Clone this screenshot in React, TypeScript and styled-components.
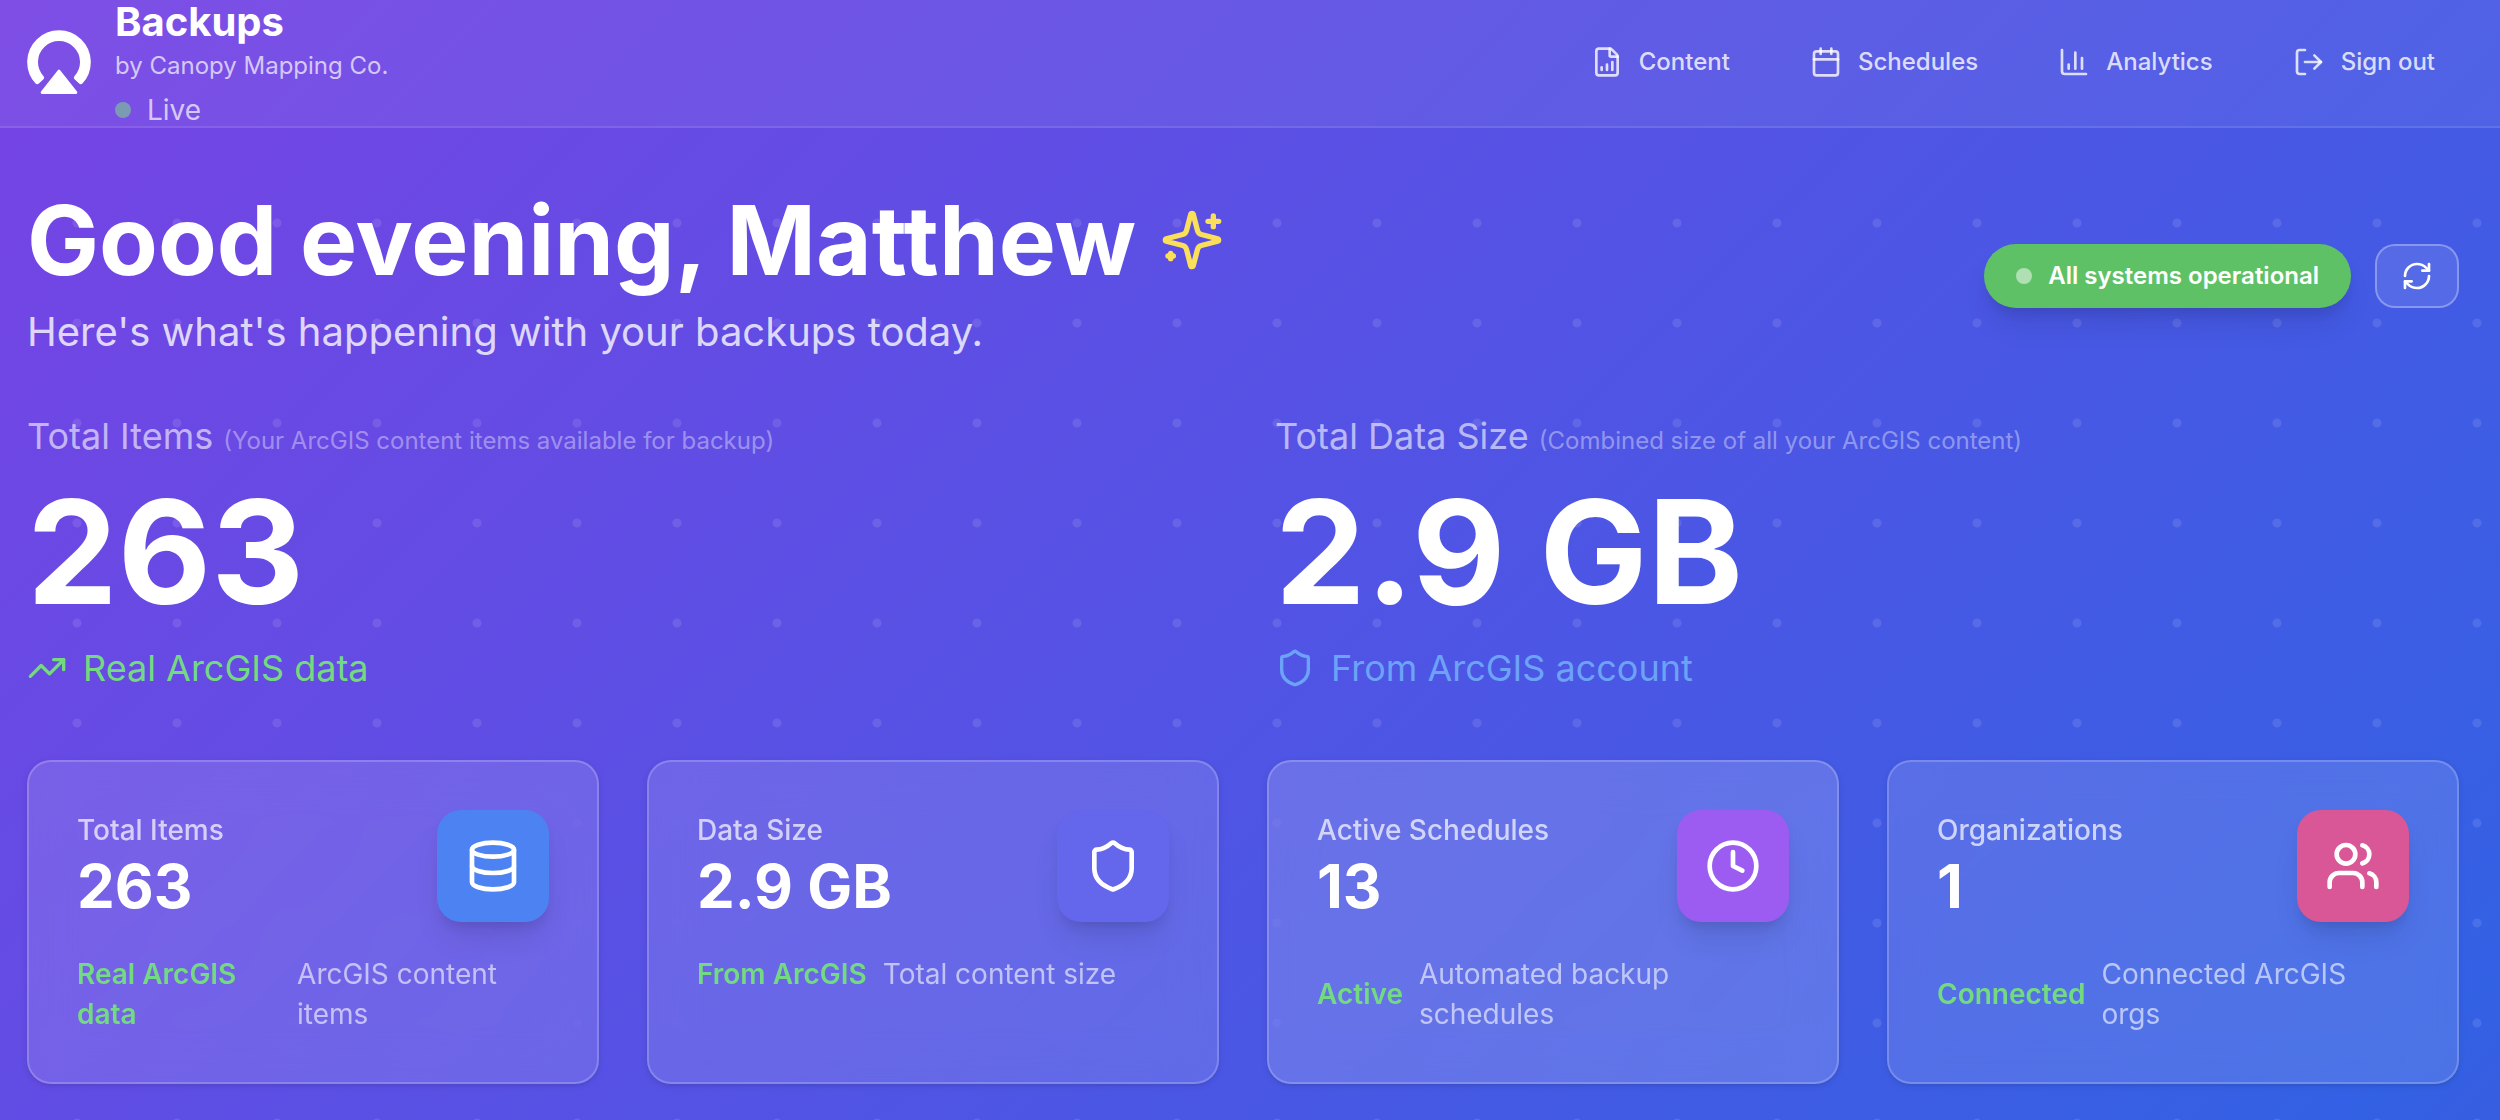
import React from "react";
import styled, { createGlobalStyle } from "styled-components";
import {
  Calendar,
  ChartColumn,
  Clock,
  Database,
  FileChartColumnIncreasing,
  LogOut,
  RefreshCw,
  Shield,
  TrendingUp,
  Users,
  type LucideIcon,
} from "lucide-react";

const GlobalStyle = createGlobalStyle`
  *, *::before, *::after { box-sizing: border-box; }
  body {
    margin: 0;
    font-family: Inter, "Liberation Sans", sans-serif;
    color: #ffffff;
    -webkit-font-smoothing: antialiased;
  }
  h1, h2, p { margin: 0; }
`;

const Page = styled.div`
  display: flex;
  flex-direction: column;
  min-height: 100vh;
  background: linear-gradient(135deg, #7743e4 0%, #3361e4 96%, #375de0 100%);
`;

const Header = styled.header`
  display: flex;
  align-items: center;
  justify-content: space-between;
  height: 128px;
  padding: 0 41px 2px 27px;
  background: rgba(255, 255, 255, 0.06);
  border-bottom: 2px solid rgba(255, 255, 255, 0.1);
`;

const Brand = styled.div`
  display: flex;
  align-items: center;
  gap: 24px;
`;

const BrandName = styled.p`
  font-size: 40px;
  line-height: 56px;
  font-weight: 700;
`;

const BrandOwner = styled.p`
  font-size: 24px;
  line-height: 32px;
  color: rgba(255, 255, 255, 0.7);
`;

const LiveStatus = styled.p`
  display: flex;
  align-items: center;
  gap: 16px;
  margin-top: 8px;
  font-size: 28px;
  line-height: 40px;
  color: rgba(255, 255, 255, 0.7);
`;

const Dot = styled.span<{ $color: string }>`
  width: 16px;
  height: 16px;
  border-radius: 50%;
  background: ${(p) => p.$color};
`;

const Nav = styled.nav`
  display: flex;
  align-items: center;
  gap: 32px;
`;

const NavLink = styled.a`
  display: flex;
  align-items: center;
  gap: 16px;
  padding: 16px 24px;
  font-size: 24px;
  line-height: 32px;
  font-weight: 500;
  color: rgba(255, 255, 255, 0.8);
  text-decoration: none;
`;

const NavButton = styled.button`
  display: flex;
  align-items: center;
  gap: 16px;
  padding: 16px 24px;
  border: 0;
  background: none;
  font: 500 24px/32px Inter, "Liberation Sans", sans-serif;
  color: rgba(255, 255, 255, 0.8);
  cursor: pointer;
`;

const Main = styled.main`
  flex: 1;
  padding: 64px 41px 36px 27px;
  background-image: radial-gradient(circle at 50px 50px, rgba(255, 255, 255, 0.1) 4px, transparent 5px);
  background-size: 100px 100px;
  background-position: 27px 45px;
`;

const Hero = styled.section`
  display: flex;
  align-items: center;
  justify-content: space-between;
  margin-bottom: 48px;
`;

const Greeting = styled.h1`
  display: flex;
  align-items: center;
  gap: 24px;
  margin-bottom: 16px;
  font-size: 96px;
  line-height: 96px;
  font-weight: 700;
`;

const Subtitle = styled.p`
  font-size: 40px;
  line-height: 56px;
  color: rgba(255, 255, 255, 0.8);
`;

const Actions = styled.div`
  display: flex;
  align-items: center;
  gap: 24px;
`;

const StatusBadge = styled.div`
  display: flex;
  align-items: center;
  gap: 16px;
  padding: 16px 32px;
  border-radius: 32px;
  background: #5fc166;
  box-shadow: 0 20px 30px -6px rgba(0, 0, 0, 0.1), 0 8px 12px -4px rgba(0, 0, 0, 0.1);
  font-size: 24px;
  line-height: 32px;
  font-weight: 600;
`;

const RefreshButton = styled.button`
  display: flex;
  align-items: center;
  justify-content: center;
  height: 64px;
  padding: 0 24px;
  border: 2px solid rgba(255, 255, 255, 0.3);
  border-radius: 20px;
  background: rgba(255, 255, 255, 0.1);
  color: #ffffff;
  cursor: pointer;
`;

const Totals = styled.section`
  display: grid;
  grid-template-columns: repeat(2, minmax(0, 1fr));
  gap: 64px;
  margin-bottom: 64px;
`;

const TotalLabel = styled.h2`
  margin-bottom: 16px;
  font-size: 36px;
  line-height: 56px;
  font-weight: 400;
  color: rgba(255, 255, 255, 0.6);
`;

const TotalHint = styled.span`
  font-size: 24px;
  line-height: 32px;
  color: rgba(255, 255, 255, 0.4);
`;

const TotalValue = styled.p`
  margin-bottom: 16px;
  font-size: 144px;
  line-height: 144px;
  font-weight: 700;
`;

const TotalNote = styled.p<{ $color: string }>`
  display: flex;
  align-items: center;
  gap: 16px;
  font-size: 36px;
  line-height: 56px;
  color: ${(p) => p.$color};
`;

const Cards = styled.section`
  display: grid;
  grid-template-columns: repeat(4, minmax(0, 1fr));
  gap: 48px;
`;

const Card = styled.article<{ $alpha: number }>`
  padding: 48px;
  border: 2px solid rgba(255, 255, 255, 0.2);
  border-radius: 24px;
  background: rgba(255, 255, 255, ${(p) => p.$alpha});
  box-shadow: 0 2px 6px rgba(0, 0, 0, 0.1), 0 2px 4px -2px rgba(0, 0, 0, 0.1);
  backdrop-filter: blur(24px);
`;

const CardTop = styled.div`
  display: flex;
  align-items: flex-start;
  justify-content: space-between;
  margin-bottom: 32px;
`;

const CardLabel = styled.h2`
  font-size: 28px;
  line-height: 40px;
  font-weight: 500;
  color: rgba(255, 255, 255, 0.7);
`;

const CardValue = styled.p`
  font-size: 60px;
  line-height: 72px;
  font-weight: 700;
`;

const IconTile = styled.div<{ $color: string }>`
  display: flex;
  padding: 28px;
  border-radius: 24px;
  background: ${(p) => p.$color};
  box-shadow: 0 20px 30px -6px rgba(0, 0, 0, 0.1), 0 8px 12px -4px rgba(0, 0, 0, 0.1);
`;

const CardFooter = styled.div`
  display: flex;
  align-items: center;
  gap: 16px;
  font-size: 28px;
  line-height: 40px;
`;

const CardTrend = styled.span`
  font-weight: 600;
  color: #74da82;
`;

const CardDescription = styled.span`
  color: rgba(255, 255, 255, 0.6);
`;

const Logo = () => (
  <svg width="64" height="64" viewBox="0 0 64 64" fill="#fff" stroke="#fff" strokeLinejoin="round" aria-hidden="true">
    <path d="M10.2 51.6A29.3 29.3 0 1 1 53.8 51.6L49.5 47.7A23.5 23.5 0 1 0 14.5 47.7Z" strokeWidth="5" />
    <path d="M32 41.2L48.8 62.5H15.2Z" strokeWidth="3" />
  </svg>
);

const Sparkles = () => (
  <svg
    width="64"
    height="64"
    viewBox="0 0 24 24"
    fill="none"
    stroke="#fae05a"
    strokeWidth="2"
    strokeLinecap="round"
    strokeLinejoin="round"
    aria-hidden="true"
  >
    <path d="M9.937 15.5A2 2 0 0 0 8.5 14.063l-6.135-1.582a.5.5 0 0 1 0-.962L8.5 9.936A2 2 0 0 0 9.937 8.5l1.582-6.135a.5.5 0 0 1 .963 0L14.063 8.5A2 2 0 0 0 15.5 9.937l6.135 1.581a.5.5 0 0 1 0 .964L15.5 14.063a2 2 0 0 0-1.437 1.437l-1.582 6.135a.5.5 0 0 1-.963 0z" />
    <path d="M20 3v4" />
    <path d="M22 5h-4" />
    <path d="M4 17v2" />
    <path d="M5 18H3" />
  </svg>
);

const links: { label: string; icon: LucideIcon }[] = [
  { label: "Content", icon: FileChartColumnIncreasing },
  { label: "Schedules", icon: Calendar },
  { label: "Analytics", icon: ChartColumn },
];

const totals: { label: string; hint: string; value: string; note: string; icon: LucideIcon; color: string }[] = [
  {
    label: "Total Items",
    hint: "(Your ArcGIS content items available for backup)",
    value: "263",
    note: "Real ArcGIS data",
    icon: TrendingUp,
    color: "#74da82",
  },
  {
    label: "Total Data Size",
    hint: "(Combined size of all your ArcGIS content)",
    value: "2.9 GB",
    note: "From ArcGIS account",
    icon: Shield,
    color: "#6ca3f7",
  },
];

const cards: {
  label: string;
  value: string;
  trend: string;
  description: string;
  icon: LucideIcon;
  color: string;
  alpha: number;
}[] = [
  { label: "Total Items", value: "263", trend: "Real ArcGIS data", description: "ArcGIS content items", icon: Database, color: "#4c82f1", alpha: 0.12 },
  { label: "Data Size", value: "2.9 GB", trend: "From ArcGIS", description: "Total content size", icon: Shield, color: "#6466ec", alpha: 0.12 },
  { label: "Active Schedules", value: "13", trend: "Active", description: "Automated backup schedules", icon: Clock, color: "#9c5cf1", alpha: 0.16 },
  { label: "Organizations", value: "1", trend: "Connected", description: "Connected ArcGIS orgs", icon: Users, color: "#da5797", alpha: 0.12 },
];

export default function App() {
  return (
    <>
      <GlobalStyle />
      <Page>
        <Header>
          <Brand>
            <Logo />
            <div>
              <BrandName>Backups</BrandName>
              <BrandOwner>by Canopy Mapping Co.</BrandOwner>
              <LiveStatus>
                <Dot $color="#7b9bb3" />
                Live
              </LiveStatus>
            </div>
          </Brand>
          <Nav>
            {links.map(({ label, icon: Icon }) => (
              <NavLink key={label} href={`#${label.toLowerCase()}`}>
                <Icon size={32} />
                {label}
              </NavLink>
            ))}
            <NavButton type="button">
              <LogOut size={32} />
              Sign out
            </NavButton>
          </Nav>
        </Header>
        <Main>
          <Hero>
            <div>
              <Greeting>
                Good evening, Matthew
                <Sparkles />
              </Greeting>
              <Subtitle>Here's what's happening with your backups today.</Subtitle>
            </div>
            <Actions>
              <StatusBadge>
                <Dot $color="rgba(255, 255, 255, 0.5)" />
                All systems operational
              </StatusBadge>
              <RefreshButton type="button" aria-label="Refresh">
                <RefreshCw size={32} />
              </RefreshButton>
            </Actions>
          </Hero>
          <Totals>
            {totals.map(({ label, hint, value, note, icon: Icon, color }) => (
              <div key={label}>
                <TotalLabel>
                  {label} <TotalHint>{hint}</TotalHint>
                </TotalLabel>
                <TotalValue>{value}</TotalValue>
                <TotalNote $color={color}>
                  <Icon size={40} />
                  {note}
                </TotalNote>
              </div>
            ))}
          </Totals>
          <Cards>
            {cards.map(({ label, value, trend, description, icon: Icon, color, alpha }) => (
              <Card key={label} $alpha={alpha}>
                <CardTop>
                  <div>
                    <CardLabel>{label}</CardLabel>
                    <CardValue>{value}</CardValue>
                  </div>
                  <IconTile $color={color}>
                    <Icon size={56} />
                  </IconTile>
                </CardTop>
                <CardFooter>
                  <CardTrend>{trend}</CardTrend>
                  <CardDescription>{description}</CardDescription>
                </CardFooter>
              </Card>
            ))}
          </Cards>
        </Main>
      </Page>
    </>
  );
}
